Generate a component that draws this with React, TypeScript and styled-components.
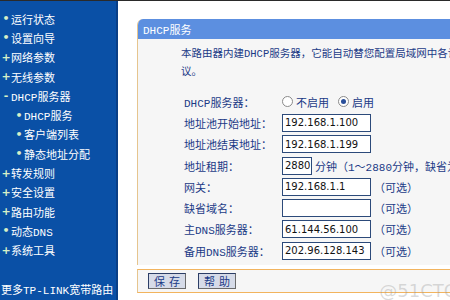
import React from "react";
import styled, { createGlobalStyle } from "styled-components";

const Global = createGlobalStyle`
  html, body { margin: 0; padding: 0; background: #fff; }
  body { width: 450px; height: 300px; overflow: hidden; }
  * { box-sizing: border-box; }
`;

const FONT = `"Liberation Mono", "Noto Sans CJK SC", sans-serif`;

const Page = styled.div`
  position: relative;
  display: flex;
  width: 450px;
  height: 300px;
  overflow: hidden;
  border-top: 1px solid #2a2a2a;
  font-family: ${FONT};
`;

const Sidebar = styled.nav`
  width: 118px;
  flex: none;
  background: #0a50a6;
  border-right: 2px solid #0a3f86;
  padding-top: 8px;
  display: flex;
  flex-direction: column;
`;

const NavItem = styled.div<{ $sub?: boolean }>`
  display: flex;
  align-items: center;
  height: 19.3px;
  padding-left: ${(p) => (p.$sub ? 14 : 1)}px;
  color: #fff;
  font-size: 11px;
  white-space: nowrap;
`;

const Bullet = styled.span`
  width: 10px;
  flex: none;
  color: #d8f0c8;
  font-size: 11px;
  font-weight: bold;
  text-align: center;
  font-family: "DejaVu Sans", sans-serif;
`;

const NavFooter = styled.div`
  margin-top: auto;
  margin-bottom: 3px;
  padding-left: 1px;
  color: #fff;
  font-size: 11px;
  white-space: nowrap;
`;

const Main = styled.main`
  flex: 1;
  padding: 18px 0 0 19px;
  display: flex;
  flex-direction: column;
  min-width: 0;
`;

const Panel = styled.section`
  width: 340px;
  background: #f6f6f6;
  border-left: 1px solid #e6c58e;
  border-top-left-radius: 6px;
  overflow: hidden;
`;

const PanelHead = styled.div`
  height: 20px;
  background: #5c8fe0;
  color: #fff;
  font-size: 11px;
  display: flex;
  align-items: center;
  padding-left: 5px;
`;

const PanelBody = styled.div`
  padding: 6px 0 4px 43px;
`;

const Desc = styled.p`
  margin: 0 0 10px 0;
  color: #1b3a86;
  font-size: 10.5px;
  line-height: 18px;
  white-space: nowrap;
`;

const Row = styled.div`
  display: flex;
  align-items: center;
  height: 21.3px;
  padding-left: 3px;
  color: #1b3a86;
  font-size: 11px;
  white-space: nowrap;
`;

const Label = styled.span`
  width: 98px;
  flex: none;
`;

const Input = styled.div<{ $w?: number }>`
  width: ${(p) => p.$w ?? 89}px;
  height: 18px;
  flex: none;
  background: #fff;
  border: 1px solid #2c4a7a;
  color: #111;
  font-family: "DejaVu Sans", sans-serif;
  font-size: 10px;
  display: flex;
  align-items: center;
  padding-left: 2px;
  overflow: hidden;
`;

const After = styled.span`
  margin-left: 3px;
  color: #1b3a86;
`;

const Radio = styled.span<{ $on?: boolean }>`
  width: 11px;
  height: 11px;
  border-radius: 50%;
  border: 1px solid #8a8a8a;
  background: #fff;
  display: inline-flex;
  align-items: center;
  justify-content: center;
  margin-right: 3px;
  &::after {
    content: "";
    width: 5px;
    height: 5px;
    border-radius: 50%;
    background: ${(p) => (p.$on ? "#2a4f9a" : "transparent")};
  }
`;

const RadioLabel = styled.span`
  margin-right: 9px;
  color: #1b3a86;
`;

const Footer = styled.div`
  margin-top: 4px;
  width: 340px;
  height: 24px;
  background: #f6f6f6;
  border-top: 1px solid #f2b45e;
  border-bottom: 1px solid #f2b45e;
  border-left: 1px solid #e6c58e;
  display: flex;
  align-items: center;
  gap: 12px;
  padding-left: 10px;
`;

const Button = styled.div`
  width: 38px;
  height: 16px;
  background: #d6dbe8;
  border: 1px solid #2c3e66;
  border-right-color: #6a6a6a;
  border-bottom-color: #6a6a6a;
  color: #1b3a86;
  font-size: 11px;
  display: flex;
  align-items: center;
  justify-content: center;
  letter-spacing: 4px;
  padding-left: 4px;
`;

const Watermark = styled.div`
  position: absolute;
  right: -8px;
  bottom: -1px;
  font-family: "DejaVu Sans", sans-serif;
  font-size: 18px;
  color: rgba(150, 150, 150, 0.35);
`;

type Nav = { b: string; t: string; sub?: boolean };

const nav: Nav[] = [
  { b: "•", t: "运行状态" },
  { b: "•", t: "设置向导" },
  { b: "+", t: "网络参数" },
  { b: "+", t: "无线参数" },
  { b: "-", t: "DHCP服务器" },
  { b: "•", t: "DHCP服务", sub: true },
  { b: "•", t: "客户端列表", sub: true },
  { b: "•", t: "静态地址分配", sub: true },
  { b: "+", t: "转发规则" },
  { b: "+", t: "安全设置" },
  { b: "+", t: "路由功能" },
  { b: "•", t: "动态DNS" },
  { b: "+", t: "系统工具" },
];

type Field = { label: string; value: string; after?: string; w?: number };

const fields: Field[] = [
  { label: "地址池开始地址：", value: "192.168.1.100" },
  { label: "地址池结束地址：", value: "192.168.1.199" },
  { label: "地址租期：", value: "2880", w: 30, after: "分钟（1～2880分钟，缺省为" },
  { label: "网关：", value: "192.168.1.1", after: "（可选）" },
  { label: "缺省域名：", value: "", after: "（可选）" },
  { label: "主DNS服务器：", value: "61.144.56.100", after: "（可选）" },
  { label: "备用DNS服务器：", value: "202.96.128.143", after: "（可选）" },
];

export default function App() {
  return (
    <>
      <Global />
      <Page>
        <Sidebar>
          {nav.map((n) => (
            <NavItem key={n.t} $sub={n.sub}>
              <Bullet>{n.b}</Bullet>
              {n.t}
            </NavItem>
          ))}
          <NavFooter>更多TP-LINK宽带路由</NavFooter>
        </Sidebar>
        <Main>
          <Panel>
            <PanelHead>DHCP服务</PanelHead>
            <PanelBody>
              <Desc>
                本路由器内建DHCP服务器，它能自动替您配置局域网中各计
                <br />
                议。
              </Desc>
              <Row>
                <Label>DHCP服务器：</Label>
                <Radio />
                <RadioLabel>不启用</RadioLabel>
                <Radio $on />
                <RadioLabel>启用</RadioLabel>
              </Row>
              {fields.map((f) => (
                <Row key={f.label}>
                  <Label>{f.label}</Label>
                  <Input $w={f.w}>{f.value}</Input>
                  {f.after && <After>{f.after}</After>}
                </Row>
              ))}
            </PanelBody>
          </Panel>
          <Footer>
            <Button>保存</Button>
            <Button>帮助</Button>
          </Footer>
        </Main>
        <Watermark>@51CTO</Watermark>
      </Page>
    </>
  );
}
